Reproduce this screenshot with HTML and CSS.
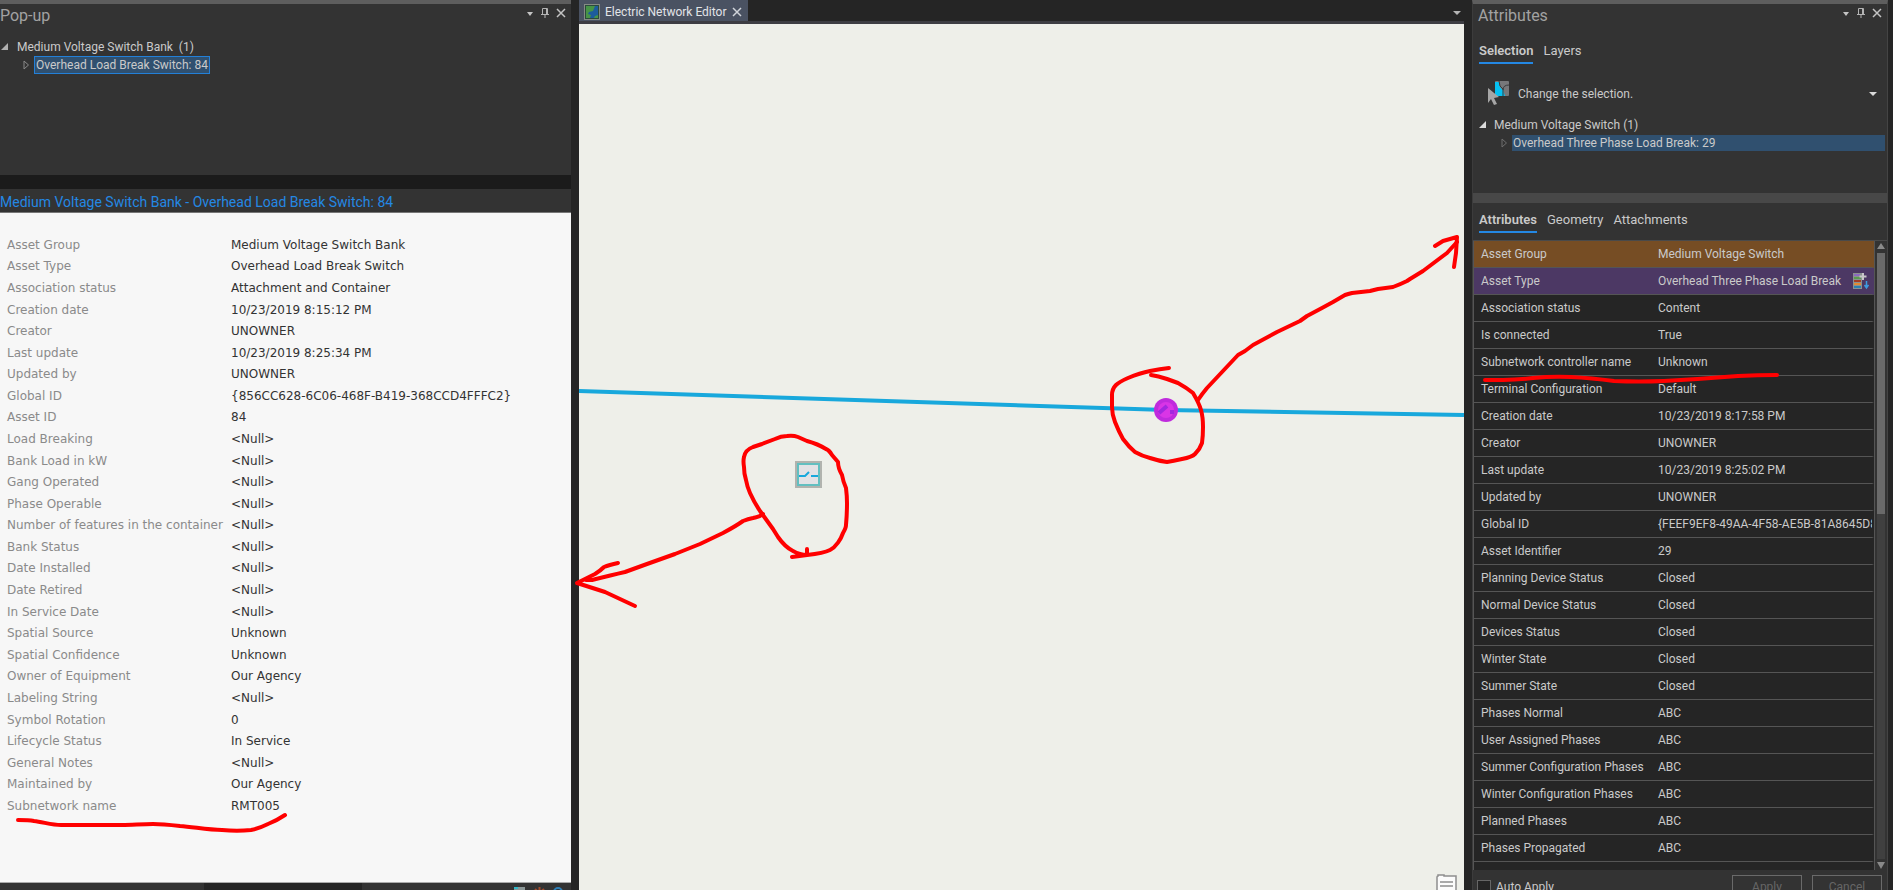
FILE: index.html
```html
<!DOCTYPE html>
<html lang="en">
<head>
    <meta charset="UTF-8">
    <meta name="viewport" content="width=device-width, initial-scale=1.0">
    <title>Electric Network Editor</title>
    <link rel="stylesheet" href="styles.css">
</head>
<body>
    <div class="workspace">
        <!-- Pop-up pane -->
        <aside class="pane popup">
            <header class="pane-header">
                <h2>Pop-up</h2>
                <div class="pane-tools">
                    <button aria-label="Options"><svg width="8" height="10"><path d="M1 4h6L4 8z" fill="#c4c4c4"/></svg></button>
                    <button aria-label="Auto hide"><svg width="10" height="12"><path d="M2.500 7V1.500h5V7M1 7.500h8M5 7.500V11M6.500 2v5" fill="none" stroke="#b4b4b4"/></svg></button>
                    <button aria-label="Close"><svg width="10" height="10"><path d="M1 1l8 8M9 1L1 9" stroke="#c4c4c4" stroke-width="1.500"/></svg></button>
                </div>
            </header>
            <ul class="tree popup-tree">
                <li><svg class="arrow" width="8" height="8"><path d="M7 0v7H0z" fill="#b0b0b0"/></svg>Medium Voltage Switch Bank&nbsp; (1)</li>
                <li class="child"><svg class="arrow" width="7" height="10"><path d="M1 1l4.500 4L1 9z" fill="none" stroke="#8a8a8a"/></svg><span class="picked">Overhead Load Break Switch: 84</span></li>
            </ul>
            <div class="splitter"></div>
            <h3 class="popup-title">Medium Voltage Switch Bank - Overhead Load Break Switch: 84</h3>
            <div class="popup-body">
                <table class="popup-table">
                    <tr><th>Asset Group</th><td>Medium Voltage Switch Bank</td></tr>
                    <tr><th>Asset Type</th><td>Overhead Load Break Switch</td></tr>
                    <tr><th>Association status</th><td>Attachment and Container</td></tr>
                    <tr><th>Creation date</th><td>10/23/2019 8:15:12 PM</td></tr>
                    <tr><th>Creator</th><td>UNOWNER</td></tr>
                    <tr><th>Last update</th><td>10/23/2019 8:25:34 PM</td></tr>
                    <tr><th>Updated by</th><td>UNOWNER</td></tr>
                    <tr><th>Global ID</th><td>{856CC628-6C06-468F-B419-368CCD4FFFC2}</td></tr>
                    <tr><th>Asset ID</th><td>84</td></tr>
                    <tr><th>Load Breaking</th><td>&lt;Null&gt;</td></tr>
                    <tr><th>Bank Load in kW</th><td>&lt;Null&gt;</td></tr>
                    <tr><th>Gang Operated</th><td>&lt;Null&gt;</td></tr>
                    <tr><th>Phase Operable</th><td>&lt;Null&gt;</td></tr>
                    <tr><th>Number of features in the container</th><td>&lt;Null&gt;</td></tr>
                    <tr><th>Bank Status</th><td>&lt;Null&gt;</td></tr>
                    <tr><th>Date Installed</th><td>&lt;Null&gt;</td></tr>
                    <tr><th>Date Retired</th><td>&lt;Null&gt;</td></tr>
                    <tr><th>In Service Date</th><td>&lt;Null&gt;</td></tr>
                    <tr><th>Spatial Source</th><td>Unknown</td></tr>
                    <tr><th>Spatial Confidence</th><td>Unknown</td></tr>
                    <tr><th>Owner of Equipment</th><td>Our Agency</td></tr>
                    <tr><th>Labeling String</th><td>&lt;Null&gt;</td></tr>
                    <tr><th>Symbol Rotation</th><td>0</td></tr>
                    <tr><th>Lifecycle Status</th><td>In Service</td></tr>
                    <tr><th>General Notes</th><td>&lt;Null&gt;</td></tr>
                    <tr><th>Maintained by</th><td>Our Agency</td></tr>
                    <tr><th>Subnetwork name</th><td>RMT005</td></tr>
                </table>
            </div>
            <footer class="popup-footer">
                <div class="coords"></div>
                <svg width="12" height="12"><rect x="0" y="0" width="11" height="11" fill="#8b9797"/><path d="M0 1h4" stroke="#30b8c8" stroke-width="2"/></svg>
                <svg width="11" height="12"><path d="M5.500 0v11M1 2l9 8M10 2l-9 8" stroke="#a04a2c" stroke-width="2"/></svg>
                <svg width="10" height="12"><circle cx="5" cy="5" r="4" fill="none" stroke="#2d7fb8" stroke-width="2"/></svg>
            </footer>
            <svg class="ink"><path d="M18 820C24 820 29 820 34 821C43 822 52 825 61 825H122C132 825 142 824 153 824C162 824 171 825 180 826C194 827 208 830 222 830C232 831 242 831 251 830C257 829 262 827 268 824Q276 821 285 815"/></svg>
        </aside>

        <!-- Map view -->
        <main class="view">
            <div class="view-tabs">
                <div class="view-tab">
                    <svg width="16" height="16"><rect width="16" height="16" fill="#858b85"/><rect x="1" y="1" width="14" height="14" fill="#2b4a3c"/><rect x="2" y="2" width="12" height="12" fill="#479447"/><path d="M14 2v9l-3 1-1 2H6l1-3-3-1 1-2 4-1 2-5z" fill="#1d5c9c"/></svg>
                    <span>Electric Network Editor</span>
                    <button aria-label="Close view"><svg width="10" height="10"><path d="M1 1l8 8M9 1L1 9" stroke="#d0d4da" stroke-width="1.500"/></svg></button>
                </div>
                <button class="view-menu" aria-label="View list"><svg width="8" height="6"><path d="M0 1h8L4 5z" fill="#b4b4b4"/></svg></button>
            </div>
            <div class="map">
                <svg class="map-canvas" viewBox="579 24 885 866" preserveAspectRatio="xMinYMin meet">
                    <!-- conductor -->
                    <path d="M579 391L1166 410L1464 415" fill="none" stroke="#18a8dc" stroke-width="4"/>
                    <!-- switch bank -->
                    <rect x="795" y="461" width="27" height="27" fill="#b1b3ae"/>
                    <rect x="798" y="464" width="21" height="21" fill="#e2e2e5" stroke="#62bfc0" stroke-width="2"/>
                    <path d="M799 476h6l4-4M811 476h7" fill="none" stroke="#18a8dc" stroke-width="2"/>
                    <!-- load break switch -->
                    <circle cx="1166" cy="410" r="12" fill="#bf2bdd"/>
                    <circle cx="1166" cy="410" r="8" fill="#d935e6"/>
                    <path d="M1159 413l8-7M1170 412h4" stroke="#a327df" stroke-width="4"/>
                    <!-- redlines -->
                    <g class="redline">
                        <path d="M792 557L807 555C816 554 824 553 830 550C836 547 841 539 843 533Q846 528 846 525Q847 514 847 503Q847 496 846 488Q843 481 842 475Q838 468 838 462L832 455Q829 450 826 449Q818 444 807 441L798 437Q793 435 787 436Q781 436 775 439L762 444L753 447Q745 450 744 457Q743 461 744 467Q744 474 746 480Q747 486 750 493Q754 502 760 511L773 529L778 537Q785 547 793 551Q800 555 807 555V549"/>
                        <path d="M763 514C760 517 757 517 753 518Q748 519 743 521Q736 526 723 533L700 544L675 554L647 564L625 572Q612 575 592 580L586 580"/>
                        <path d="M618 563Q609 565 604 567Q600 571 595 574L577 583L605 592L635 606"/>
                        <path d="M1169 368Q1160 369 1150 371Q1140 373 1128 378Q1119 382 1116 385Q1112 389 1112 395V407Q1112 414 1115 422Q1119 432 1123 439Q1129 447 1135 452Q1142 456 1150 458Q1159 461 1167 462Q1173 461 1182 459Q1192 457 1195 454Q1200 449 1202 443Q1203 436 1203 427Q1203 417 1201 410Q1199 403 1193 393Q1187 388 1178 383L1167 379Q1158 376 1151 375"/>
                        <path d="M1198 400Q1202 394 1207 388L1238 355L1245 351L1253 345L1277 332L1300 321L1307 316L1322 308L1333 302L1345 295Q1348 294 1352 293L1370 291L1378 289L1393 287Q1401 284 1407 281L1410 279L1423 271L1447 253L1457 242"/>
                        <path d="M1435 246L1443 241L1457 237L1456 253L1454 267"/>
                    </g>
                </svg>
                <svg class="notes" width="21" height="16"><path d="M1 16V3q0-1 1-1V1h6v1h12v14" fill="#fbfbfb" stroke="#8e8e8e" stroke-width="1.500"/><path d="M4 8h13M4 12h13" stroke="#8e8e8e" stroke-width="1.500"/></svg>
            </div>
        </main>

        <!-- Attributes pane -->
        <aside class="pane attributes">
            <header class="pane-header">
                <h2>Attributes</h2>
                <div class="pane-tools">
                    <button aria-label="Options"><svg width="8" height="10"><path d="M1 4h6L4 8z" fill="#c4c4c4"/></svg></button>
                    <button aria-label="Auto hide"><svg width="10" height="12"><path d="M2.500 7V1.500h5V7M1 7.500h8M5 7.500V11M6.500 2v5" fill="none" stroke="#b4b4b4"/></svg></button>
                    <button aria-label="Close"><svg width="10" height="10"><path d="M1 1l8 8M9 1L1 9" stroke="#c4c4c4" stroke-width="1.500"/></svg></button>
                </div>
            </header>
            <nav class="tabs tabs-main">
                <button class="active">Selection</button>
                <button>Layers</button>
            </nav>
            <button class="change">
                <svg width="23" height="25"><rect x="8" y="0" width="14" height="15" rx="1" fill="#77787a"/><path d="M8 1h4q0 6 4 8l2 6H8z" fill="#06c1f2"/><path d="M12 0q0 6 4 8v7M16 9q0-5 6-5" fill="none" stroke="#3a3a3a"/><path d="M1 7l11 9-5 1 3 6-3 1-3-6-3 4z" fill="#a6a6a6"/></svg>
                <span>Change the selection.</span>
                <svg class="caret" width="8" height="6"><path d="M0 1h8L4 5z" fill="#dadada"/></svg>
            </button>
            <ul class="tree attr-tree">
                <li><svg class="arrow" width="8" height="8"><path d="M7 0v7H0z" fill="#dadada"/></svg>Medium Voltage Switch (1)</li>
                <li class="child"><svg class="arrow" width="7" height="10"><path d="M1 1l4.500 4L1 9z" fill="none" stroke="#6e6e6e"/></svg><span class="picked">Overhead Three Phase Load Break: 29</span></li>
            </ul>
            <div class="splitter"></div>
            <nav class="tabs tabs-sub">
                <button class="active">Attributes</button>
                <button>Geometry</button>
                <button>Attachments</button>
            </nav>
            <div class="grid-area">
                <div class="grid-scroll">
                    <table class="attr-table">
                        <tr class="group"><th>Asset Group</th><td>Medium Voltage Switch</td></tr>
                        <tr class="type"><th>Asset Type</th><td><div class="cell">Overhead Three Phase Load Break
                            <svg width="17" height="18"><path d="M1 1h9v16H1z" fill="#8b9190"/><path d="M2 3h6" stroke="#8c6ac0" stroke-width="2"/><path d="M2 6h7" stroke="#5a9a50" stroke-width="2"/><path d="M2 9h7" stroke="#a33c25" stroke-width="2"/><path d="M2 12h7" stroke="#e08a32" stroke-width="2"/><path d="M2 15h7" stroke="#2c7fb0" stroke-width="2"/><path d="M11 1v7M7.500 4.500h7" stroke="#c8c8c8" stroke-width="2"/><path d="M14.500 9v6M12.500 13l2 3 2-3" fill="none" stroke="#3d9be0" stroke-width="1.500"/></svg></div></td></tr>
                        <tr><th>Association status</th><td>Content</td></tr>
                        <tr><th>Is connected</th><td>True</td></tr>
                        <tr><th>Subnetwork controller name</th><td>Unknown</td></tr>
                        <tr><th>Terminal Configuration</th><td>Default</td></tr>
                        <tr><th>Creation date</th><td>10/23/2019 8:17:58 PM</td></tr>
                        <tr><th>Creator</th><td>UNOWNER</td></tr>
                        <tr><th>Last update</th><td>10/23/2019 8:25:02 PM</td></tr>
                        <tr><th>Updated by</th><td>UNOWNER</td></tr>
                        <tr><th>Global ID</th><td>{FEEF9EF8-49AA-4F58-AE5B-81A8645D87</td></tr>
                        <tr><th>Asset Identifier</th><td>29</td></tr>
                        <tr><th>Planning Device Status</th><td>Closed</td></tr>
                        <tr><th>Normal Device Status</th><td>Closed</td></tr>
                        <tr><th>Devices Status</th><td>Closed</td></tr>
                        <tr><th>Winter State</th><td>Closed</td></tr>
                        <tr><th>Summer State</th><td>Closed</td></tr>
                        <tr><th>Phases Normal</th><td>ABC</td></tr>
                        <tr><th>User Assigned Phases</th><td>ABC</td></tr>
                        <tr><th>Summer Configuration Phases</th><td>ABC</td></tr>
                        <tr><th>Winter Configuration Phases</th><td>ABC</td></tr>
                        <tr><th>Planned Phases</th><td>ABC</td></tr>
                        <tr><th>Phases Propagated</th><td>ABC</td></tr>
                        <tr><th></th><td></td></tr>
                    </table>
                </div>
                <div class="scrollbar">
                    <svg width="8" height="7"><path d="M0 6L4 0l4 6z" fill="#8a8a8a"/></svg>
                    <div class="track"><div class="thumb"></div></div>
                    <svg width="8" height="7"><path d="M0 0l4 7 4-7z" fill="#8a8a8a"/></svg>
                </div>
            </div>
            <footer class="attr-footer">
                <label><input type="checkbox">Auto Apply</label>
                <button disabled>Apply</button>
                <button disabled>Cancel</button>
            </footer>
            <svg class="ink"><path d="M12 380H30Q46 380 60 378Q80 376 98 377Q118 378 141 381Q166 382 191 381Q228 379 265 376Q285 375 304 375"/></svg>
        </aside>
    </div>
</body>
</html>
```

FILE: styles.css
```css
* {
    box-sizing: border-box;
}

body {
    margin: 0;
    background-color: #252525;
    color: #cacaca;
    font-family: "Segoe UI", Roboto, "Open Sans", sans-serif;
    font-size: 12px;
}

h2, h3, ul {
    margin: 0;
    padding: 0;
    font-weight: 400;
    list-style: none;
}

button {
    padding: 0;
    border: none;
    background: none;
    color: inherit;
    font: inherit;
    cursor: pointer;
}

svg {
    display: block;
    flex: none;
}

.workspace {
    display: grid;
    grid-template-columns: 571px minmax(0, 1fr) 416px;
    gap: 8px;
    height: 100vh;
    padding-right: 5px;
    overflow: hidden;
}

/* docked panes */
.pane {
    position: relative;
    display: flex;
    flex-direction: column;
    min-height: 0;
    background-color: #333;
    border-top: 4px solid #5e5e5e;
}

.pane-header {
    display: flex;
    justify-content: space-between;
    height: 26px;
}

.pane-header h2 {
    color: #a2a2a2;
    font-size: 16px;
    line-height: 23px;
}

.pane-tools {
    display: flex;
    align-items: center;
    gap: 6px;
    height: 18px;
    padding-right: 5px;
}

.ink {
    position: absolute;
    top: -4px;
    left: 0;
    width: 100%;
    height: 100%;
    pointer-events: none;
}

.ink path,
.redline path {
    fill: none;
    stroke: #f00;
    stroke-width: 4;
    stroke-linecap: round;
    stroke-linejoin: round;
}

.tree li {
    display: flex;
    align-items: center;
    height: 18px;
    white-space: nowrap;
}

/* pop-up */
.popup-tree {
    height: 145px;
    padding: 8px 0 0 1px;
}

.popup-tree .arrow {
    margin-right: 8px;
}

.popup-tree .child {
    padding-left: 22px;
}

.popup-tree .child .arrow {
    margin-right: 4px;
}

.popup-tree .picked {
    padding: 0 1px;
    border: 1px solid #2380d8;
    background-color: #30506f;
    line-height: 16px;
}

.popup .splitter {
    height: 14px;
    background-color: #1b1b1b;
}

.popup-title {
    height: 24px;
    border-bottom: 1px solid #777;
    color: #2488e4;
    font-size: 14px;
    line-height: 26px;
}

.popup-body {
    flex: 1;
    min-height: 0;
    padding: 21px 0 65px 7px;
    background-color: #f7f7f7;
}

.popup-table {
    height: 100%;
    border-spacing: 0;
    color: #333;
    font-family: "DejaVu Sans", Verdana, sans-serif;
}

.popup-table th,
.popup-table td {
    padding: 0;
    font-weight: 400;
    text-align: left;
    white-space: nowrap;
}

.popup-table th {
    width: 224px;
    color: #8a8a8a;
}

.popup-footer {
    display: flex;
    gap: 8px;
    height: 8px;
    padding-right: 8px;
    border-top: 1px solid #aaa;
    overflow: hidden;
}

.popup-footer svg {
    margin-top: 4px;
}

.coords {
    width: 158px;
    margin: 0 auto 0 204px;
    background-color: #252525;
}

/* map view */
.view {
    display: flex;
    flex-direction: column;
    min-height: 0;
}

.view-tabs {
    display: flex;
    justify-content: space-between;
    height: 24px;
    border-bottom: 3px solid #3d3d43;
}

.view-tab {
    display: flex;
    align-items: center;
    gap: 5px;
    padding: 2px 6px 0 5px;
    background-color: #4a5262;
    color: #e2e4e8;
}

.view-menu {
    padding: 4px 3px 0 0;
}

.map {
    position: relative;
    flex: 1;
    min-height: 0;
    background-color: #eeefe9;
}

.map-canvas {
    width: 100%;
    height: 100%;
    overflow: visible;
}

.notes {
    position: absolute;
    right: 7px;
    bottom: 0;
}

/* attributes */
.attributes {
    border-right: 1px solid #444;
    border-left: 1px solid #3c3c3c;
}

.attributes .pane-header h2 {
    padding-left: 5px;
}

.tabs {
    display: flex;
    gap: 10px;
    padding-left: 6px;
    font-size: 13px;
}

.tabs button {
    height: 24px;
    padding-bottom: 1px;
    border-bottom: 2px solid transparent;
}

.tabs .active {
    border-color: #2488e4;
    font-weight: 600;
}

.tabs-main {
    padding-top: 10px;
}

.change {
    display: flex;
    align-items: center;
    gap: 8px;
    height: 25px;
    margin: 17px 10px 0 14px;
}

.change .caret {
    margin-left: auto;
}

.attr-tree {
    height: 87px;
    padding: 10px 2px 0 6px;
}

.attr-tree .arrow {
    margin-right: 7px;
}

.attr-tree .child {
    padding-left: 22px;
}

.attr-tree .child .arrow {
    margin-right: 4px;
}

.attr-tree .picked {
    flex: 1;
    padding-left: 1px;
    background-color: #30506f;
    line-height: 16px;
}

.attributes .splitter {
    height: 10px;
    background-color: #484848;
}

.tabs-sub {
    height: 37px;
    padding-top: 6px;
}

.grid-area {
    display: flex;
    flex: 1;
    min-height: 0;
    border-top: 1px solid #4a4a4a;
}

.grid-scroll {
    flex: 1;
    min-width: 0;
    border-right: 1px solid #555;
    border-left: 1px solid #555;
    overflow: hidden;
}

.attr-table {
    width: 100%;
    table-layout: fixed;
    border-spacing: 0;
    background-color: #252525;
}

.attr-table th,
.attr-table td {
    height: 27px;
    padding: 0 0 0 7px;
    border-bottom: 1px solid #555;
    font-weight: 400;
    line-height: 16px;
    text-align: left;
    white-space: nowrap;
    overflow: hidden;
}

.attr-table th {
    width: 176px;
}

.attr-table td {
    padding-left: 8px;
    border-right: 2px solid transparent;
}

.attr-table .group {
    background-color: #764d24;
}

.attr-table .type {
    background-color: #4c3864;
}

.cell {
    display: flex;
    align-items: center;
    justify-content: space-between;
    padding-right: 3px;
}

.scrollbar {
    display: flex;
    flex-direction: column;
    gap: 3px;
    width: 12px;
    padding: 2px 2px 1px;
}

.track {
    flex: 1;
    background-color: #404040;
}

.thumb {
    height: 43%;
    background-color: #6a6a6a;
}

.attr-footer {
    display: flex;
    gap: 10px;
    height: 20px;
    padding: 5px 5px 0 4px;
    overflow: hidden;
}

.attr-footer label {
    display: flex;
    align-items: center;
    gap: 5px;
    height: 24px;
    margin-right: auto;
}

.attr-footer input {
    appearance: none;
    width: 14px;
    height: 14px;
    margin: 0;
    border: 1px solid #666;
    background-color: #252525;
}

.attr-footer button {
    width: 70px;
    height: 24px;
    border: 1px solid #6a6a6a;
    color: #666;
}
```
